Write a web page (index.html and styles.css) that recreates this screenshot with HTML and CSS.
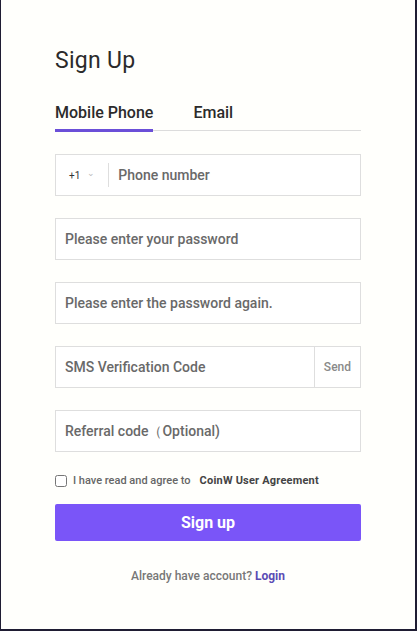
FILE: index.html
```html
<!DOCTYPE html>
<html lang="en">
<head>
    <meta charset="UTF-8">
    <meta name="viewport" content="width=device-width, initial-scale=1.0">
    <title>CoinW - Sign Up</title>
    <link rel="stylesheet" href="styles.css">
</head>
<body>

    <div class="signup-box">
        <h1>Sign Up</h1>

        <div class="tabs">
            <span class="tab active">Mobile Phone</span>
            <span class="tab">Email</span>
        </div>

        <form id="formSignup">
            <div class="field">
                <span class="prefix">+1 <span class="caret">&#8964;</span></span>
                <input type="text" name="phone" placeholder="Phone number">
            </div>

            <div class="field">
                <input type="password" name="password" placeholder="Please enter your password">
            </div>

            <div class="field">
                <input type="password" name="password2" placeholder="Please enter the password again.">
            </div>

            <div class="field">
                <input type="text" name="sms" placeholder="SMS Verification Code">
                <span class="send">Send</span>
            </div>

            <div class="field">
                <input type="text" name="referral" placeholder="Referral code（Optional)">
            </div>

            <label class="agree">
                <input type="checkbox" name="agree">
                <span>I have read and agree to</span>
                <a href="#" class="agreement">CoinW User Agreement</a>
            </label>

            <button type="submit">Sign up</button>
        </form>

        <p class="login">Already have account? <a href="#">Login</a></p>
    </div>

</body>
</html>
```

FILE: styles.css
```css
html, body {
    height: 100%;
}

body {
    margin: 0;
    font-family: Roboto, "Noto Sans", sans-serif;
    background-color: #1f1d33;
    box-sizing: border-box;
    padding: 0 2px 2px 1px;
}

.signup-box {
    background-color: #fffffc;
    height: 100%;
    box-sizing: border-box;
    padding: 47px 54px 0 54px;
}

h1 {
    font-size: 23px;
    font-weight: 400;
    color: #2b2b2b;
    margin: 0 0 29px 0;
    letter-spacing: 0.3px;
}

.tabs {
    display: flex;
    gap: 40px;
    border-bottom: 1px solid #dcdcdc;
    margin-bottom: 23px;
}

    .tabs .tab {
        font-size: 16px;
        font-weight: 500;
        color: #2b2b2b;
        padding-bottom: 7px;
        border-bottom: 3px solid transparent;
        margin-bottom: -2px;
    }

    .tabs .tab.active {
        border-bottom-color: #6b4fd8;
    }

.field {
    display: flex;
    align-items: center;
    height: 42px;
    box-sizing: border-box;
    border: 1px solid #dedede;
    margin-bottom: 22px;
    background-color: #fff;
}

    .field input {
        flex: 1;
        border: none;
        outline: none;
        height: 100%;
        padding: 0 9px;
        font-family: inherit;
        font-size: 14px;
        font-weight: 500;
        color: #333;
        background: transparent;
        min-width: 0;
    }

    .field input::placeholder {
        color: #696969;
    }

.prefix {
    display: flex;
    align-items: center;
    gap: 7px;
    font-size: 10px;
    color: #333;
    padding: 0 13px 0 13px;
    height: 24px;
    border-right: 1px solid #dedede;
}

    .prefix .caret {
        font-size: 9px;
        color: #bbb;
        line-height: 1;
        margin-top: -4px;
    }

.send {
    display: flex;
    align-items: center;
    height: 100%;
    padding: 0 9px;
    border-left: 1px solid #dedede;
    font-size: 12px;
    font-weight: 500;
    color: #8a8a8a;
}

.agree {
    display: flex;
    align-items: center;
    gap: 4px;
    font-size: 11px;
    font-weight: 500;
    color: #666;
    margin: 5px 0 17px 0;
}

    .agree input {
        margin: 0 2px 0 0;
        width: 12px;
        height: 12px;
    }

    .agree .agreement {
        color: #444;
        font-weight: 700;
        text-decoration: none;
        margin-left: 5px;
        letter-spacing: 0.2px;
    }

button {
    width: 100%;
    height: 37px;
    border: none;
    border-radius: 2px;
    background-color: #7a55f8;
    color: #fff;
    font-family: inherit;
    font-size: 16px;
    font-weight: 700;
    cursor: pointer;
}

.login {
    text-align: center;
    font-size: 12px;
    font-weight: 500;
    color: #777;
    margin: 28px 0 0 0;
}

    .login a {
        color: #5b4bb5;
        text-decoration: none;
        font-weight: 700;
    }
```
